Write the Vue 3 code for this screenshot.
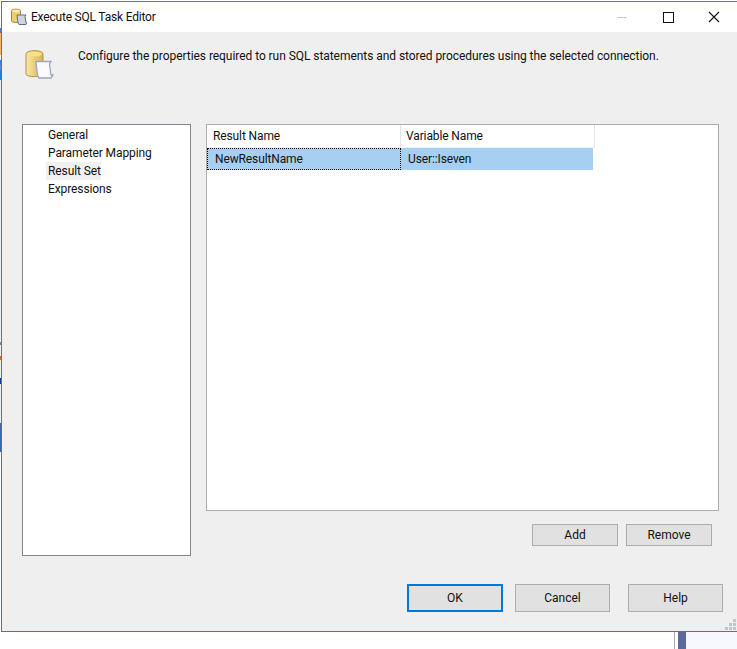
<script setup>
const navItems = ['General', 'Parameter Mapping', 'Result Set', 'Expressions']
const headers = ['Result Name', 'Variable Name']
</script>

<template>
  <div class="screen">
    <div class="window">
      <header class="titlebar">
        <svg class="title-icon" width="18" height="18" viewBox="0 0 18 18">
          <path d="M1.500 3c0-2.500 9-2.500 9 0v10c0 2-9 2-9 0z" fill="#edcf72" stroke="#a98a3f"/>
          <ellipse cx="6" cy="3" rx="3.800" ry="1.200" fill="#fbeeb8"/>
          <path d="M7 7h9l-1 1.500 1 6.500h1l-1 1.500H9l-1-1.500z" fill="#cfd5e0" stroke="#5e6b85"/>
        </svg>
        <span class="title">Execute SQL Task Editor</span>
        <div class="controls">
          <span class="ctl"><i class="min"></i></span>
          <span class="ctl"><i class="max"></i></span>
          <span class="ctl">
            <svg width="12" height="12" viewBox="0 0 12 12"><path d="M1 1l10 10M11 1L1 11" stroke="#111" stroke-width="1.1" fill="none"/></svg>
          </span>
        </div>
      </header>
      <div class="body">
        <div class="intro">
          <svg class="intro-icon" width="30" height="30" viewBox="0 0 30 30">
            <defs>
              <linearGradient id="cyl" x1="0" x2="1" y1="0" y2="0">
                <stop offset="0" stop-color="#f7e6a4"/>
                <stop offset="1" stop-color="#dcb552"/>
              </linearGradient>
            </defs>
            <path d="M1 4c0-4.500 17-4.500 17 0v20c0 3.500-17 3.500-17 0z" fill="url(#cyl)" stroke="#b8913f"/>
            <ellipse cx="9.500" cy="4" rx="7.500" ry="2.300" fill="#f6e08c"/>
            <path d="M11 11.500h15l-1.500 2.500 1.500 11h2l-2 3H14l-1.500-3-1-8z" fill="#fbfbfd" stroke="#9aa6bc" stroke-width="1.300"/>
          </svg>
          <p class="intro-text">Configure the properties required to run SQL statements and stored procedures using the selected connection.</p>
        </div>
        <div class="main">
          <nav class="nav">
            <div v-for="item in navItems" :key="item" class="nav-item">
              <span :class="{ current: item === 'Result Set' }">{{ item }}</span>
            </div>
          </nav>
          <div class="panel">
            <div class="grid-box">
              <div class="grid-head">
                <div v-for="h in headers" :key="h" class="head-cell">{{ h }}</div>
              </div>
              <div class="grid-row">
                <div class="cell focused">NewResultName</div>
                <div class="cell second">User::Iseven</div>
              </div>
            </div>
            <div class="panel-actions">
              <button class="btn small">Add</button>
              <button class="btn small">Remove</button>
            </div>
          </div>
        </div>
        <div class="footer">
          <button class="btn big ok">OK</button>
          <button class="btn big">Cancel</button>
          <button class="btn big help">Help</button>
        </div>
        <div class="grip">
          <svg width="12" height="12" viewBox="0 0 12 12"><path d="M8 0h3v3H8zM4 4h3v3H4zM8 4h3v3H8zM0 8h3v3H0zM4 8h3v3H4zM8 8h3v3H8z" fill="#c4c4c4"/></svg>
        </div>
      </div>
    </div>
    <div class="under">
      <div class="under-line"></div>
      <div class="under-bar"></div>
      <div class="under-rest"></div>
    </div>
  </div>
</template>

<style>
html, body { margin: 0; background: #fff; overflow: hidden; }
</style>

<style scoped>
.screen {
  width: 737px;
  height: 649px;
  padding: 1px 0 0 1px;
  box-sizing: border-box;
  display: flex;
  flex-direction: column;
  overflow: hidden;
  font-family: Roboto, sans-serif;
  font-size: 12px;
  color: #111;
  background: linear-gradient(to bottom,
    #fff 0, #fff 28px, #5a7fc0 28px, #5a7fc0 33px, #f0b860 33px, #f0b860 55px,
    #fff 55px, #fff 60px, #1580dc 60px, #8a7fd0 68px, #1580dc 72px, #1580dc 80px,
    #f0f0f0 80px, #f0f0f0 342px, #888 342px, #888 345px, #f0f0f0 345px, #f0f0f0 356px,
    #d8702a 356px, #d8702a 360px, #f0f0f0 360px, #f0f0f0 378px, #0a3f9a 378px, #0a3f9a 384px,
    #f0f0f0 384px, #f0f0f0 423px, #3a66b0 423px, #3a66b0 452px, #fff 452px) no-repeat 0 0 / 1px 100%;
  background-color: #fff;
}
.window {
  height: 631px;
  box-sizing: border-box;
  flex: none;
  border: 1px solid #2f7fc8;
  border-right: 0;
  background: #efefef;
  display: flex;
  flex-direction: column;
  position: relative;
}
.titlebar {
  height: 30px;
  flex: none;
  background: #fff;
  display: flex;
  align-items: center;
  padding-left: 8px;
}
.title-icon { margin-right: 3px; }
.title { font-size: 12px; letter-spacing: -0.2px; }
.controls { margin-left: auto; display: flex; }
.ctl { width: 46px; height: 30px; display: flex; align-items: center; justify-content: center; }
.min { display: block; width: 10px; height: 1px; background: #c8c8c8; }
.max { display: block; width: 9px; height: 9px; border: 1px solid #111; }
.body { flex: 1; display: flex; flex-direction: column; position: relative; }
.intro { height: 92px; flex: none; display: flex; padding-left: 23px; box-sizing: border-box; }
.intro-icon { margin-top: 18px; }
.intro-text { margin: 15px 0 0 23px; white-space: nowrap; line-height: 18px; letter-spacing: -0.055px; }
.main { display: flex; padding-left: 20px; height: 432px; flex: none; }
.nav {
  width: 169px;
  box-sizing: border-box;
  background: #fff;
  border: 1px solid #828790;
  padding: 1px 0 0 25px;
  flex: none;
}
.nav-item { height: 18px; line-height: 18px; white-space: nowrap; letter-spacing: -0.1px; }
.nav-item .current { display: inline-block; width: 55px; box-sizing: border-box; background: #f0f0f0; padding: 0 2px; margin-left: -2px; }
.panel { margin-left: 15px; width: 513px; flex: none; }
.grid-box {
  height: 387px;
  box-sizing: border-box;
  background: #fff;
  border: 1px solid #acacac;
  letter-spacing: -0.12px;
}
.grid-head { display: flex; height: 23px; }
.head-cell {
  width: 194px;
  box-sizing: border-box;
  border-right: 1px solid #e5e5e5;
  border-bottom: 1px solid #f0f0f0;
  padding-left: 6px;
  line-height: 22px;
}
.head-cell:last-child { padding-left: 5px; }
.grid-row { display: flex; height: 22px; }
.cell { line-height: 22px; background: #a6cff1; box-sizing: border-box; }
.focused { width: 194px; padding-left: 8px; outline: 1px dotted #000; outline-offset: -1px; }
.second { width: 192px; padding-left: 7px; }
.panel-actions { display: flex; gap: 8px; padding: 13px 0 0 326px; }
.btn {
  box-sizing: border-box;
  background: #e1e1e1;
  border: 1px solid #adadad;
  font: inherit;
  color: #111;
  padding: 0;
}
.small { width: 86px; height: 22px; }
.footer { display: flex; padding: 28px 0 0 405px; }
.big { width: 95px; height: 28px; margin-right: 12px; }
.ok { width: 96px; border: 2px solid #0078d7; }
.help { margin-left: 6px; margin-right: 0; }
.grip { position: absolute; right: 0; bottom: 0; line-height: 0; }
.under { flex: 1; display: flex; padding-left: 673px; }
.under-line { width: 1px; background: #a9a9a9; }
.under-bar { width: 8px; margin-left: 3px; background: #5b6a9c; }
.under-rest { flex: 1; background: #f6f8fe; }
</style>
